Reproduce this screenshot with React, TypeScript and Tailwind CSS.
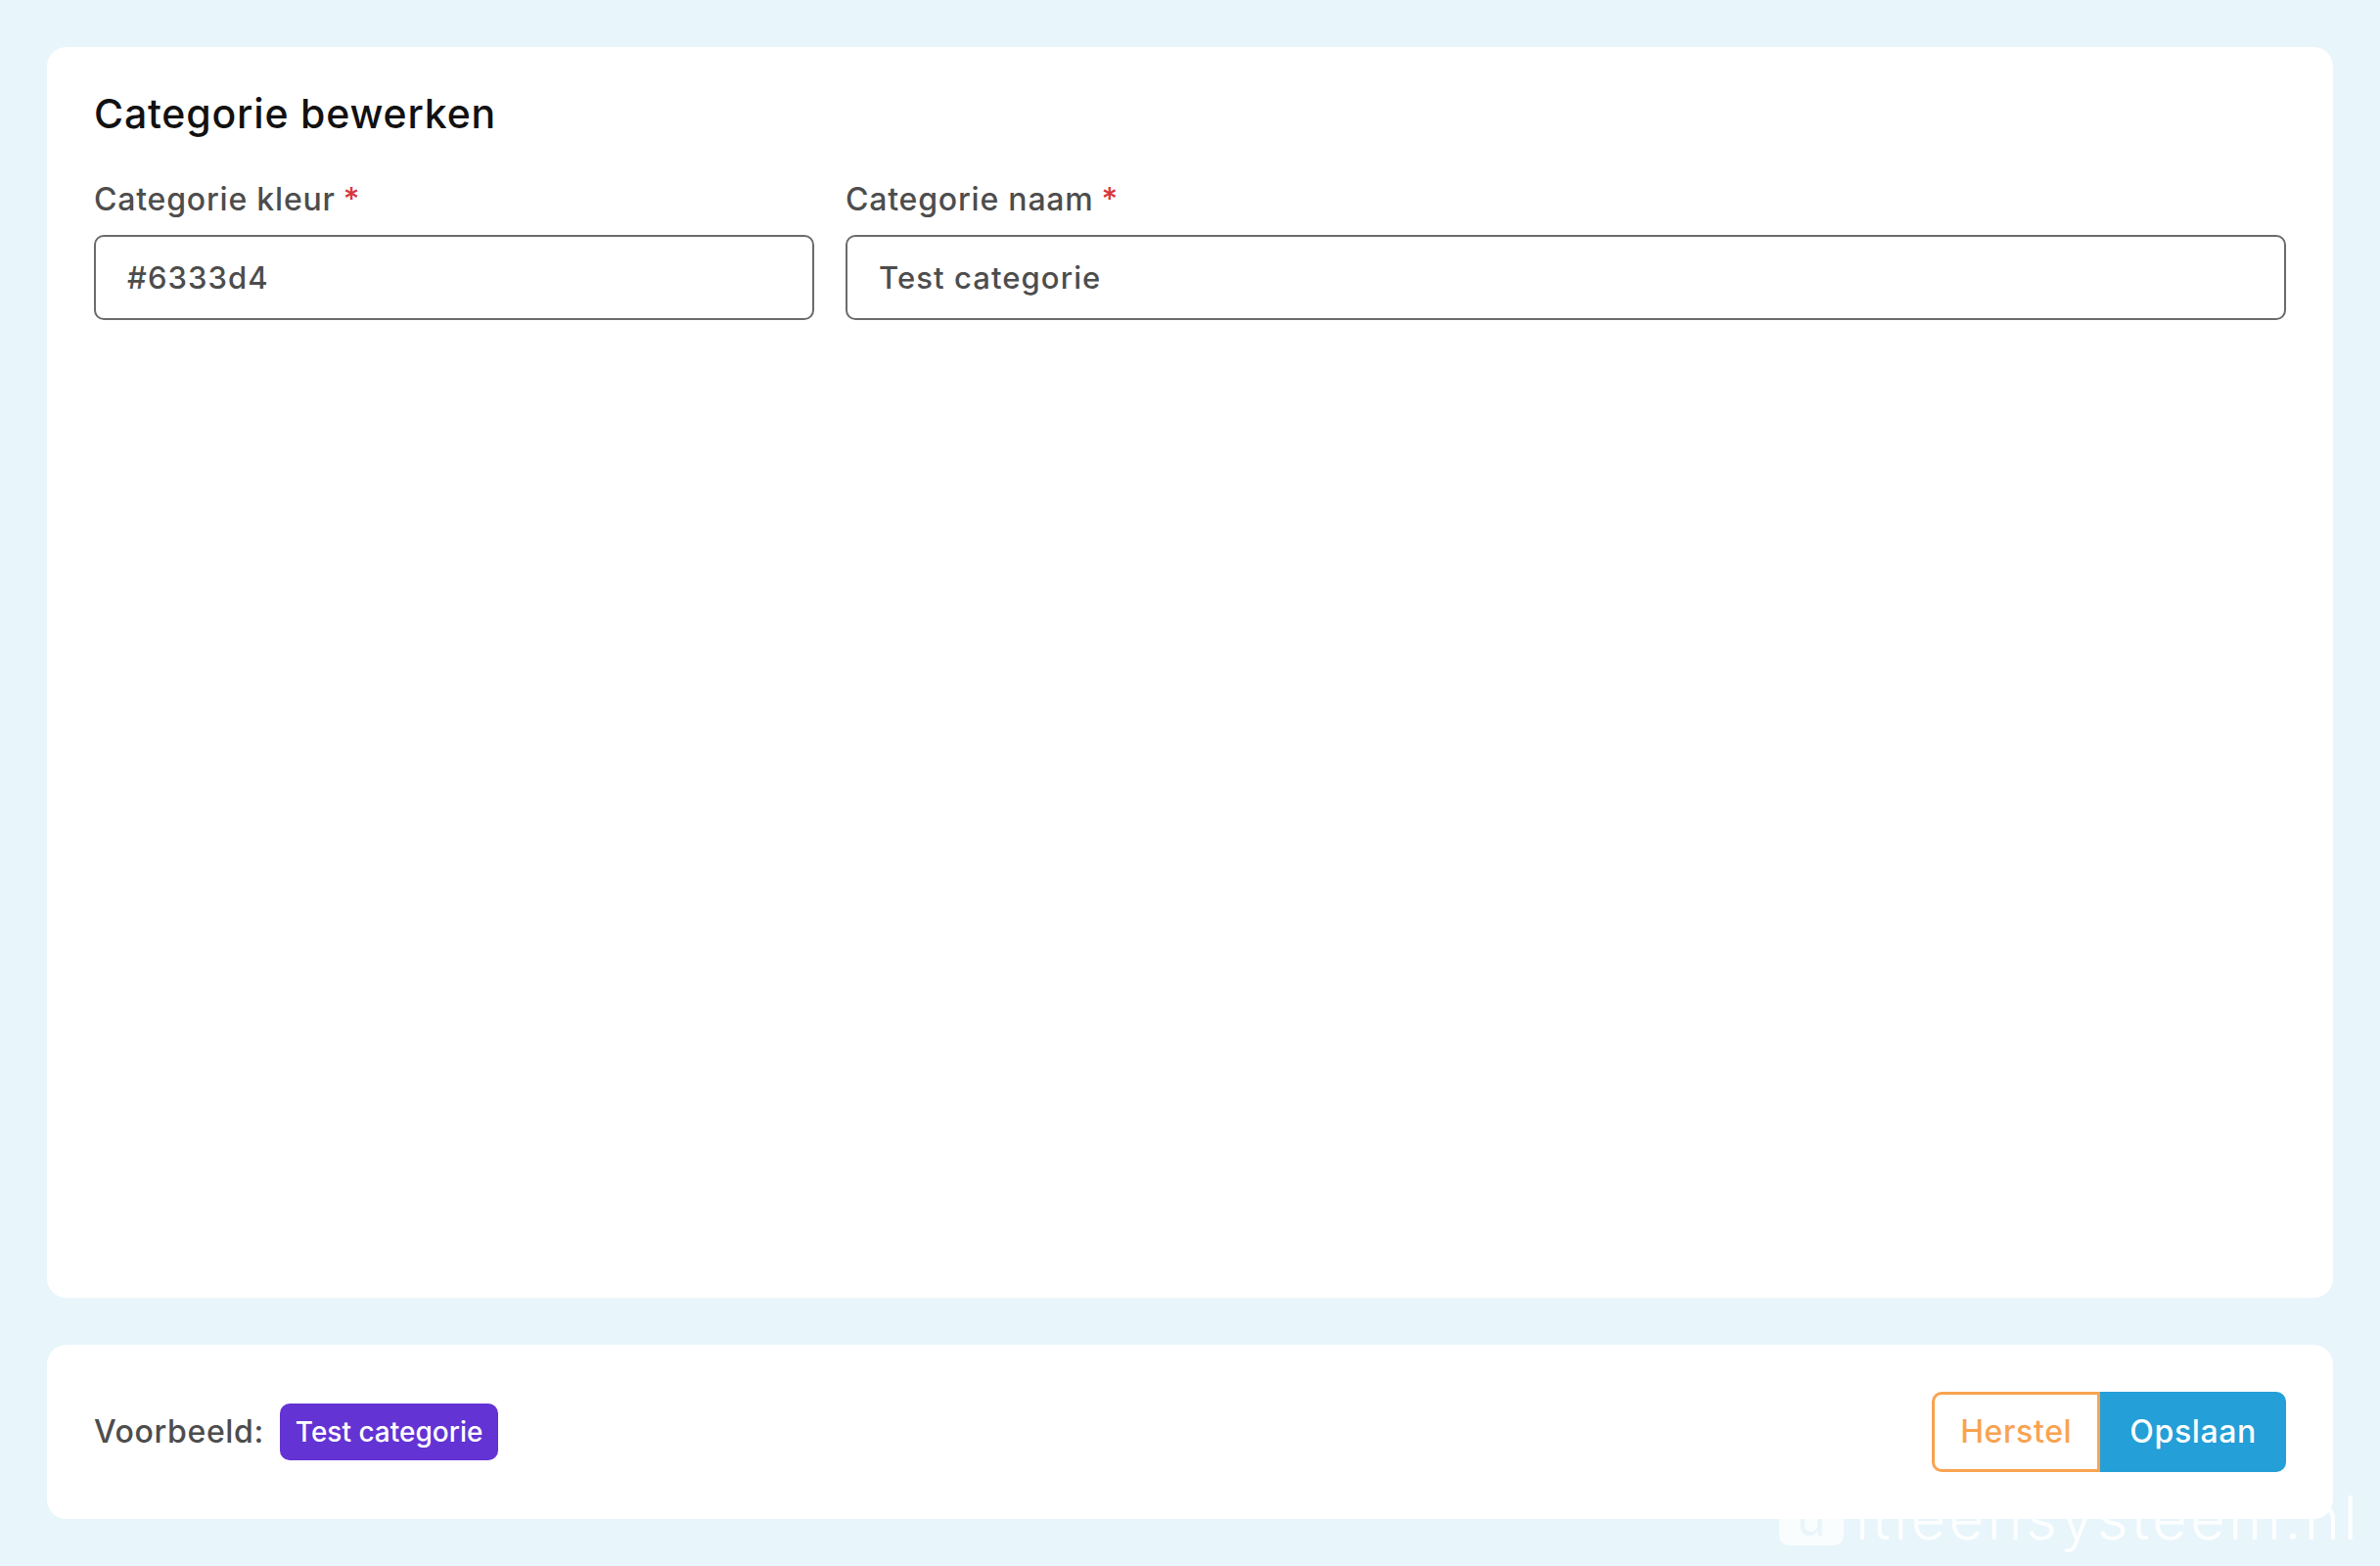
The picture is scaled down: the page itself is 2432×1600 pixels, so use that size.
import { useState } from 'react'

function Field({
  label,
  value,
  onChange,
}: {
  label: string
  value: string
  onChange: (v: string) => void
}) {
  return (
    <label className="flex flex-col">
      <span className="mb-4 text-[32px] leading-[40px] font-medium tracking-[0.025em] text-[#4d4d4d]">
        {label}
        <span className="ml-2 text-[#d9363e]">*</span>
      </span>
      <input
        value={value}
        onChange={(e) => onChange(e.target.value)}
        className="h-[87px] rounded-[10px] border-2 border-[#6b6b6b] bg-white px-8 text-[31px] font-medium tracking-[0.035em] text-[#4d4d4d] outline-none"
      />
    </label>
  )
}

export default function App() {
  const [color, setColor] = useState('#6333d4')
  const [name, setName] = useState('Test categorie')

  return (
    <div
      className="relative flex h-[1600px] w-full flex-col gap-12 overflow-hidden bg-[#e8f5fb] p-12"
      style={{ fontFamily: 'Inter, "Noto Sans", sans-serif' }}
    >
      {/* watermark sits behind the footer card */}
      <div className="pointer-events-none absolute right-[20px] bottom-[18px] flex items-center gap-3 text-white/90">
        <span className="flex h-[56px] w-[66px] items-center justify-center rounded-[10px] bg-white/80 text-[50px] leading-none text-[#e8f5fb]">
          u
        </span>
        <span className="text-[62px] leading-none font-light tracking-[0.05em]">itleensysteem.nl</span>
      </div>

      <section className="relative z-10 flex-1 rounded-[20px] bg-white p-12">
        <h1 className="mb-12 text-[41px] leading-[40px] font-medium tracking-[0.02em] text-[#111]">
          Categorie bewerken
        </h1>
        <div className="grid grid-cols-[1fr_2fr] gap-8">
          <Field label="Categorie kleur" value={color} onChange={setColor} />
          <Field label="Categorie naam" value={name} onChange={setName} />
        </div>
      </section>

      <section className="relative z-10 flex h-[178px] shrink-0 items-center justify-between rounded-[20px] bg-white px-12">
        <div className="flex items-center gap-4">
          <span className="text-[32px] font-medium tracking-[0.02em] text-[#4d4d4d]">Voorbeeld:</span>
          <span
            className="flex h-[58px] items-center rounded-[10px] px-4 text-[28px] font-medium text-white"
            style={{ backgroundColor: color }}
          >
            {name}
          </span>
        </div>
        <div className="flex">
          <button
            type="button"
            onClick={() => {
              setColor('#6333d4')
              setName('Test categorie')
            }}
            className="h-[82px] rounded-l-[10px] border-[3px] border-[#f9a350] bg-white px-[26px] text-[32px] font-medium tracking-[0.02em] text-[#f9a350]"
          >
            Herstel
          </button>
          <button
            type="button"
            className="h-[82px] rounded-r-[10px] bg-[#249fd8] px-[30px] text-[32px] font-medium tracking-[0.02em] text-white"
          >
            Opslaan
          </button>
        </div>
      </section>
    </div>
  )
}
